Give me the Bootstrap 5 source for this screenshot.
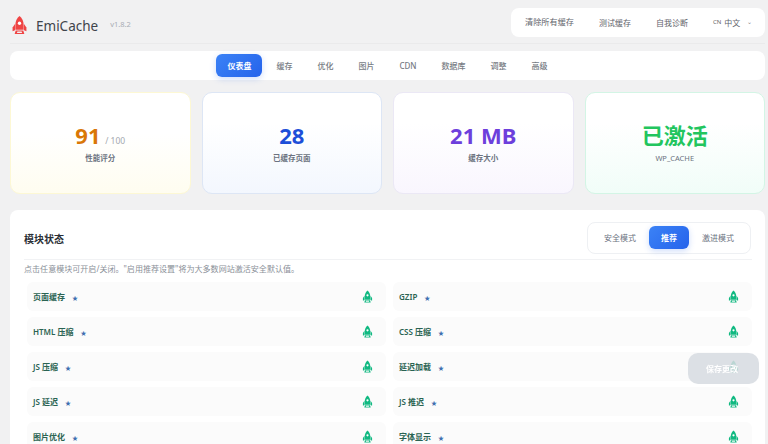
<!DOCTYPE html>
<html lang="zh-CN">
<head>
    <meta charset="UTF-8">
    <title>EmiCache</title>
    <link href="https://cdn.jsdelivr.net/npm/bootstrap@5.3.0/dist/css/bootstrap.min.css" rel="stylesheet">
    <style>
        html, body { height: 444px; overflow: hidden; }
        body {
            background: #f1f1f2;
            font-family: "Noto Sans", "Noto Sans CJK SC", sans-serif;
            font-size: 8px;
            color: #4b5563;
            padding: 0 3px 0 10px;
        }
        .top-bar { height: 44px; border-bottom: 1px solid #eaeaeb; padding-top: 8px; }
        .brand-wrap { margin-top: 5px; }
        .logo-mark { width: 17px; height: 18px; margin-left: 1px; }
        .brand-name { font-size: 13.5px; color: #3f444b; margin-left: 8px; line-height: 20px; margin-top: 3px; }
        .brand-ver { font-size: 7.5px; color: #a8adb5; margin-left: 12px; }
        .action-box { background: #fff; border-radius: 8px; height: 29px; width: 254px; padding: 0 14px; }
        .action-box span { white-space: nowrap; color: #5f646c; }
        .action-box .lang-code { font-size: 6px; color: #666; margin-right: 3px; }
        .action-box .first-act { font-size: 8.16px; }
        .lang-pick { margin-left: 25px; }
        .lang-pick .caret { font-size: 6px; margin-left: 7px; color: #888; }
        .action-box .gap-after { margin-right: 25px; }
        .tab-bar { background: #fff; border-radius: 8px; height: 29px; margin-top: 7px; gap: 3px; }
        .tab-item { padding: 0 11px; height: 23px; line-height: 23px; border-radius: 6px; color: #777c84; font-weight: 500; }
        .tab-item.is-on, .mode-item.is-on {
            background: linear-gradient(135deg, #3b82f6, #2563eb);
            color: #fff;
            font-weight: 700;
            box-shadow: 0 2px 6px rgba(37, 99, 235, .22);
        }
        .stat-grid { display: grid; grid-template-columns: repeat(4, 1fr); gap: 11px; margin-top: 12px; }
        .stat-box { height: 102px; border-radius: 10px; border: 1px solid #e5e7eb; }
        .stat-amber { background: linear-gradient(180deg, #fff 40%, #fffdf0); border-color: #fdf8d4; }
        .stat-blue { background: linear-gradient(180deg, #fff 30%, #f3f7fe); border-color: #dde6f5; }
        .stat-violet { background: linear-gradient(180deg, #fff 30%, #f9f6fe); border-color: #ebe8f5; }
        .stat-green { background: linear-gradient(180deg, #fff 30%, #f1fdf8); border-color: #d3f5e5; }
        .stat-num { font-size: 22px; font-weight: 700; line-height: 24px; }
        .stat-num small { font-size: 8.5px; font-weight: 400; color: #a3a8b0; line-height: 1; margin-left: -1px; }
        .stat-label { font-size: 7.5px; font-weight: 600; color: #6b7280; line-height: 12px; margin-top: 5px; }
        .c-amber { color: #d97706; }
        .c-blue { color: #1d4ed8; }
        .c-violet { color: #6d3fdc; }
        .c-green { color: #22c55e; }
        .module-panel { background: #fff; border-radius: 8px 8px 0 0; margin-top: 16px; padding: 12px 13px 0 14px; height: 260px; }
        .panel-head { height: 38px; border-bottom: 1px solid #f1f2f4; padding-bottom: 6px; }
        .panel-title { font-size: 10px; font-weight: 700; color: #2b2f36; margin: 2px 0 0; }
        .mode-box { border: 1px solid #eef0f3; border-radius: 8px; height: 32px; width: 164px; padding: 0 4px; margin-right: 1px; }
        .mode-item { padding: 0 11px; height: 23px; line-height: 23px; border-radius: 6px; color: #6b7280; white-space: nowrap; }
        .mode-item.is-on { padding: 0 12px; margin: 0 2px; }
        .panel-hint { color: #8a8f98; line-height: 12px; margin-top: 3px; margin-bottom: 7px; font-size: 8.05px; }
        .module-grid { display: grid; grid-template-columns: 1fr 1fr; column-gap: 6.5px; row-gap: 6px; margin-left: 2.5px; }
        .module-row { height: 29px; background: #fbfbfb; border-radius: 6px; padding: 0 13.5px 0 6.5px; }
        .module-name { font-weight: 600; color: #2a6352; }
        .module-star { font-size: 6px; color: #3f6fb0; margin-left: 7px; }
        .rocket-ok { width: 11px; height: 13px; }
        .save-float {
            position: fixed; left: 688px; top: 353px; width: 71px; height: 31px;
            background: rgba(214, 219, 225, .86); border: 0; border-radius: 10px;
            color: #fff; font-size: 8px; font-weight: 700; padding: 0 3px 0 0;
        }
    </style>
</head>
<body>

<svg width="0" height="0" class="position-absolute">
    <symbol id="rocket" viewBox="0 0 24 26">
        <path d="M12 0C16 3 18 8 18 13V20H6V13C6 8 8 3 12 0Z"/>
        <path d="M5.500 11.500L2 16.500V22L5.500 20.500Z"/>
        <path d="M18.500 11.500L22 16.500V22L18.500 20.500Z"/>
        <path d="M6.500 21H17.500L19 26H5Z M9 22.500L8.300 24.500H15.700L15 22.500Z" fill-rule="evenodd"/>
        <circle cx="12" cy="10.500" r="2.400" fill="#fff"/>
    </symbol>
</svg>

<header class="top-bar d-flex justify-content-between align-items-start">
    <div class="brand-wrap d-flex align-items-center">
        <svg class="logo-mark" fill="#ef4444"><use href="#rocket"/></svg>
        <span class="brand-name">EmiCache</span>
        <span class="brand-ver">v1.8.2</span>
    </div>
    <div class="action-box d-flex align-items-center">
        <span class="gap-after first-act">清除所有缓存</span>
        <span class="gap-after">测试缓存</span>
        <span>自我诊断</span>
        <span class="lang-pick d-flex align-items-center"><span class="lang-code">CN</span>中文<span class="caret">⌄</span></span>
    </div>
</header>

<nav class="tab-bar d-flex justify-content-center align-items-center">
    <div class="tab-item is-on">仪表盘</div>
    <div class="tab-item">缓存</div>
    <div class="tab-item">优化</div>
    <div class="tab-item">图片</div>
    <div class="tab-item">CDN</div>
    <div class="tab-item">数据库</div>
    <div class="tab-item">调整</div>
    <div class="tab-item">高级</div>
</nav>

<section class="stat-grid">
    <div class="stat-box stat-amber d-flex flex-column align-items-center justify-content-center">
        <div class="stat-num c-amber">91 <small>/ 100</small></div>
        <div class="stat-label">性能评分</div>
    </div>
    <div class="stat-box stat-blue d-flex flex-column align-items-center justify-content-center">
        <div class="stat-num c-blue">28</div>
        <div class="stat-label">已缓存页面</div>
    </div>
    <div class="stat-box stat-violet d-flex flex-column align-items-center justify-content-center">
        <div class="stat-num c-violet">21 MB</div>
        <div class="stat-label">缓存大小</div>
    </div>
    <div class="stat-box stat-green d-flex flex-column align-items-center justify-content-center">
        <div class="stat-num c-green">已激活</div>
        <div class="stat-label fw-normal">WP_CACHE</div>
    </div>
</section>

<section class="module-panel">
    <div class="panel-head d-flex justify-content-between align-items-center">
        <h2 class="panel-title">模块状态</h2>
        <div class="mode-box d-flex align-items-center justify-content-center">
            <div class="mode-item">安全模式</div>
            <div class="mode-item is-on">推荐</div>
            <div class="mode-item">激进模式</div>
        </div>
    </div>
    <p class="panel-hint">点击任意模块可开启/关闭。"启用推荐设置"将为大多数网站激活安全默认值。</p>
    <div class="module-grid" id="moduleGrid"></div>
</section>

<button type="button" class="save-float">保存更改</button>

<script src="https://cdn.jsdelivr.net/npm/bootstrap@5.3.0/dist/js/bootstrap.bundle.min.js"></script>
<script>
    const modules = ["页面缓存", "GZIP", "HTML 压缩", "CSS 压缩", "JS 压缩", "延迟加载", "JS 延迟", "JS 推迟", "图片优化", "字体显示"];

    document.getElementById("moduleGrid").innerHTML = modules.map(name => `
        <div class="module-row d-flex justify-content-between align-items-center">
            <div><span class="module-name">${name}</span><span class="module-star">★</span></div>
            <svg class="rocket-ok" fill="#10b981"><use href="#rocket"/></svg>
        </div>`).join("");
</script>

</body>
</html>
